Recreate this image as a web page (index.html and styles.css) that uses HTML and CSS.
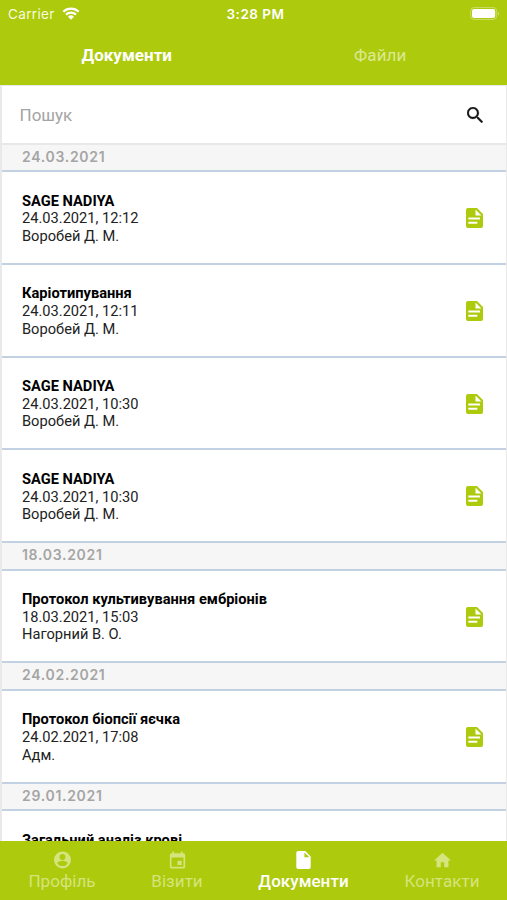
FILE: index.html
```html
<!DOCTYPE html>
<html lang="uk">
<head>
<meta charset="utf-8">
<meta name="viewport" content="width=device-width">
<title>Документи</title>
<link rel="stylesheet" href="styles.css">
</head>
<body>
<svg class="defs" aria-hidden="true">
  <symbol id="doc" viewBox="0 0 17 20">
    <path fill-rule="evenodd" d="M2 0h9l6 6v12a2 2 0 0 1-2 2H2a2 2 0 0 1-2-2V2a2 2 0 0 1 2-2zM9.500 1.600v5.900h6zM2.300 9.600v2H14v-2zM2.300 13.800v2h9v-2z"/>
  </symbol>
</svg>
<div class="app">
  <header class="top">
    <div class="status">
      <div class="carrier"><span>Carrier</span>
        <svg class="wifi" viewBox="0 0 18 13"><path d="M1.300 4.700a11 11 0 0 1 15.400 0M4 7.600a7.200 7.200 0 0 1 10 0" fill="none" stroke="#fff" stroke-width="2.200"/><path d="M6 9.700a4.300 4.300 0 0 1 6 0L9 12.700z" fill="#fff"/></svg>
      </div>
      <span class="time">3:28 PM</span>
      <svg class="battery" viewBox="0 0 32 14"><rect x=".6" y=".6" width="28" height="12.800" rx="3.600" fill="none" stroke="#fff" stroke-opacity=".4"/><rect x="2" y="2.200" width="25" height="9.600" rx="2.200" fill="#fff"/><path d="M30 4.800q2 2.200 0 4.400z" fill="#fff" fill-opacity=".5"/></svg>
    </div>
    <nav class="tabs"><span class="tab tab-active">Документи</span><span class="tab">Файли</span></nav>
  </header>
  <main class="content">
    <div class="search"><span>Пошук</span>
      <svg class="search-icon" viewBox="3 3 17.500 17.500"><path d="M15.500 14h-.79l-.28-.27A6.471 6.471 0 0 0 16 9.500 6.500 6.500 0 1 0 9.500 16c1.610 0 3.090-.59 4.230-1.570l.27.28v.79l5 4.990L20.490 19l-4.990-5zm-6 0C7.010 14 5 11.990 5 9.500S7.010 5 9.500 5 14 7.010 14 9.500 11.990 14 9.500 14z"/></svg>
    </div>
    <section>
      <h2 class="date date-first">24.03.2021</h2>
      <article class="row"><div><h3>SAGE NADIYA</h3><p>24.03.2021, 12:12</p><p>Воробей Д. М.</p></div><svg class="doc"><use href="#doc"/></svg></article>
      <article class="row"><div><h3>Каріотипування</h3><p>24.03.2021, 12:11</p><p>Воробей Д. М.</p></div><svg class="doc"><use href="#doc"/></svg></article>
      <article class="row"><div><h3>SAGE NADIYA</h3><p>24.03.2021, 10:30</p><p>Воробей Д. М.</p></div><svg class="doc"><use href="#doc"/></svg></article>
      <article class="row"><div><h3>SAGE NADIYA</h3><p>24.03.2021, 10:30</p><p>Воробей Д. М.</p></div><svg class="doc"><use href="#doc"/></svg></article>
    </section>
    <section>
      <h2 class="date">18.03.2021</h2>
      <article class="row"><div><h3>Протокол культивування ембріонів</h3><p>18.03.2021, 15:03</p><p>Нагорний В. О.</p></div><svg class="doc"><use href="#doc"/></svg></article>
    </section>
    <section>
      <h2 class="date">24.02.2021</h2>
      <article class="row"><div><h3>Протокол біопсії яєчка</h3><p>24.02.2021, 17:08</p><p>Адм.</p></div><svg class="doc"><use href="#doc"/></svg></article>
    </section>
    <section>
      <h2 class="date">29.01.2021</h2>
      <article class="row"><div><h3>Загальний аналіз крові</h3></div></article>
    </section>
  </main>
  <nav class="bottom">
    <div class="item"><svg viewBox="2 2 20 20"><path fill-rule="evenodd" d="M12 2a10 10 0 1 0 0 20 10 10 0 0 0 0-20zm0 3a3.500 3.500 0 1 1 0 7 3.500 3.500 0 0 1 0-7zm0 14.200a7.200 7.200 0 0 1-6-3.220c.030-1.990 4-3.080 6-3.080s5.970 1.090 6 3.080a7.200 7.200 0 0 1-6 3.220z"/></svg><span>Профіль</span></div>
    <div class="item"><svg viewBox="2 1 20 20"><path d="M17 12h-5v5h5v-5zM16 1v2H8V1H6v2H5c-1.110 0-1.990.9-1.990 2L3 19a2 2 0 0 0 2 2h14c1.100 0 2-.9 2-2V5c0-1.100-.9-2-2-2h-1V1h-2zm3 18H5V8h14v11z"/></svg><span>Візити</span></div>
    <div class="item item-active"><svg viewBox="0 0 16 20"><path fill-rule="evenodd" d="M2 0h8l6 6v12a2 2 0 0 1-2 2H2a2 2 0 0 1-2-2V2a2 2 0 0 1 2-2zM9 1.600V7h5.500z"/></svg><span>Документи</span></div>
    <div class="item"><svg viewBox="2 1 20 21"><path d="M10 20v-6h4v6h5v-8h3L12 3 2 12h3v8z"/></svg><span>Контакти</span></div>
  </nav>
</div>
</body>
</html>
```
FILE: styles.css
```css
* { box-sizing: border-box; }
body { margin: 0; font-family: Roboto, "Noto Sans", sans-serif; background: #fff; }
h2, h3, p { margin: 0; }
.defs { display: none; }
.app { height: 900px; display: flex; flex-direction: column; overflow: hidden; }
.top { flex: none; height: 84.500px; background: #adca0c; color: #fff; }
.status { height: 27px; display: grid; grid-template-columns: 1fr auto 1fr; align-items: center; padding: 0 6px 0 8px; font-family: Inter, sans-serif; font-size: 13.500px; }
.carrier { display: flex; align-items: center; gap: 7px; letter-spacing: .35px; color: #f8fbdf; }
.wifi { width: 18px; height: 13px; }
.time { font-weight: 600; letter-spacing: .5px; padding-left: 2px; }
.battery { width: 32px; height: 13px; justify-self: end; }
.tabs { display: grid; grid-template-columns: 1fr 1fr; height: 55px; align-items: center; text-align: center; font-size: 17px; }
.tab { color: #dce994; letter-spacing: .1px; }
.tab-active { color: #fff; font-weight: 700; letter-spacing: 0; }
.content { flex: 1; min-height: 0; overflow: hidden; border: solid #e9e9ea; border-width: 1px 1px 0 2px; }
.search { height: 59px; display: flex; align-items: center; justify-content: space-between; padding: 1px 23px 0 17.500px; font-size: 17px; color: #a4a4a4; border-bottom: 2px solid #e8e8e8; }
.search-icon { width: 16px; height: 16px; fill: #151515; stroke: #151515; stroke-width: .3px; }
.date { height: 27.400px; padding-left: 20px; background: #f6f6f6; font: 600 14px/24px Inter, sans-serif; letter-spacing: .7px; color: #a5a5a5; border-bottom: 2px solid #c3d2e3; }
.date-first { height: 27.600px; line-height: 24px; }
.row { height: 92.800px; display: flex; justify-content: space-between; padding: 20.500px 23px 0 20px; border-bottom: 2px solid #c3d2e3; font-size: 14.650px; line-height: 17.600px; color: #222; }
.row h3 { font-size: 14.650px; font-weight: 700; color: #000; }
.doc { width: 17px; height: 20px; margin-top: 15.500px; fill: #adca0c; }
.bottom { flex: none; height: 59px; display: grid; grid-template-columns: 124px 106px 147px 1fr; background: #adca0c; color: #d5e47c; font-size: 17px; }
.item { display: flex; flex-direction: column; align-items: center; padding-top: 10px; line-height: 20px; letter-spacing: .05px; }
.item svg { width: 17px; height: 18px; margin-bottom: 2px; fill: currentColor; }
.item-active { color: #fff; font-weight: 500; }
```
